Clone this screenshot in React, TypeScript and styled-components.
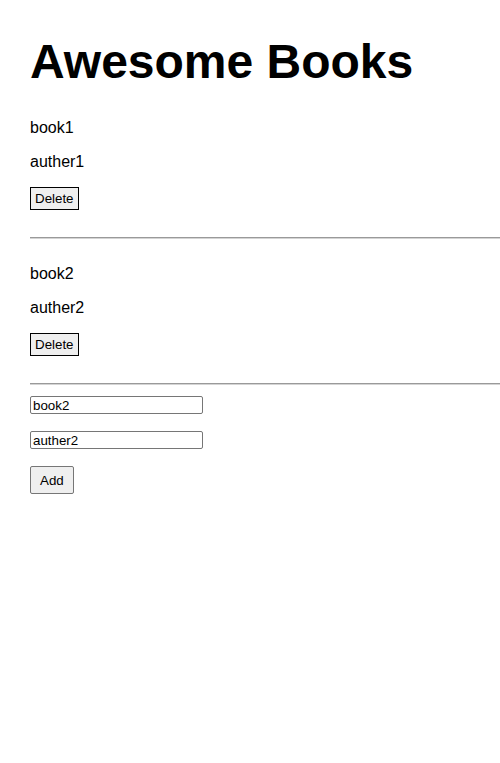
import React, { useState } from "react";
import styled, { createGlobalStyle } from "styled-components";

const GlobalStyle = createGlobalStyle`
  html, body {
    margin: 0;
    padding: 0;
    background: #ffffff;
    overflow-x: hidden;
  }
  body {
    font-family: "Liberation Sans", Arial, sans-serif;
    color: #000000;
  }
`;

const Page = styled.main`
  padding: 34px 0 0 30px;
`;

const Heading = styled.h1`
  margin: 0;
  font-size: 48px;
  font-weight: 700;
  line-height: 55px;
`;

const BookList = styled.section`
  margin-top: 30px;
`;

const Book = styled.article`
  display: flex;
  flex-direction: column;
  align-items: flex-start;
  margin-bottom: 26px;
`;

const Text = styled.p`
  margin: 0 0 16px 0;
  font-size: 16px;
  line-height: 18px;
`;

const DeleteButton = styled.button`
  height: 23px;
  padding: 0 4px;
  border: 1px solid #000000;
  border-radius: 0;
  background: #efefef;
  font-family: "Liberation Sans", Arial, sans-serif;
  font-size: 13.33px;
  color: #000000;
  cursor: pointer;
`;

const Divider = styled.hr`
  align-self: stretch;
  margin: 27px 0 0 0;
  height: 0;
  border: none;
  border-top: 1px solid #9a9a9a;
  border-bottom: 1px solid #d4d4d4;
`;

const Form = styled.form`
  display: flex;
  flex-direction: column;
  align-items: flex-start;
  margin-top: -15px;
`;

const Input = styled.input`
  box-sizing: border-box;
  width: 173px;
  height: 18px;
  margin-bottom: 17px;
  padding: 0 2px;
  border: 1px solid #767676;
  border-radius: 2px;
  font-family: "Liberation Sans", Arial, sans-serif;
  font-size: 13.33px;
  color: #000000;
  background: #ffffff;
`;

const AddButton = styled.button`
  box-sizing: border-box;
  height: 28px;
  padding: 0 9px;
  border: 1px solid #767676;
  border-radius: 2px;
  background: #efefef;
  font-family: "Liberation Sans", Arial, sans-serif;
  font-size: 13.33px;
  color: #000000;
  cursor: pointer;
`;

type BookData = { title: string; author: string };

export default function App() {
  const [books] = useState<BookData[]>([
    { title: "book1", author: "auther1" },
    { title: "book2", author: "auther2" },
  ]);
  const [title, setTitle] = useState("book2");
  const [author, setAuthor] = useState("auther2");

  return (
    <>
      <GlobalStyle />
      <Page>
        <Heading>Awesome Books</Heading>
        <BookList>
          {books.map((b, i) => (
            <Book key={i}>
              <Text>{b.title}</Text>
              <Text>{b.author}</Text>
              <DeleteButton type="button">Delete</DeleteButton>
              <Divider />
            </Book>
          ))}
        </BookList>
        <Form onSubmit={(e) => e.preventDefault()}>
          <Input value={title} onChange={(e) => setTitle(e.target.value)} />
          <Input value={author} onChange={(e) => setAuthor(e.target.value)} />
          <AddButton type="submit">Add</AddButton>
        </Form>
      </Page>
    </>
  );
}
